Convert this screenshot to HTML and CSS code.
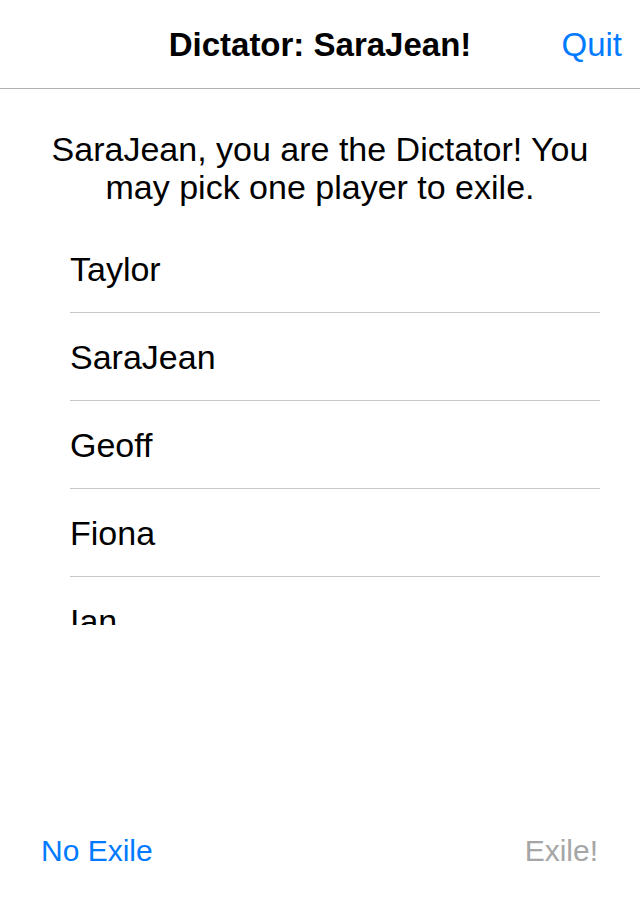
FILE: index.html
```html
<!DOCTYPE html>
<html>
<head>
<meta charset="utf-8">
<link rel="stylesheet" href="styles.css">
</head>
<body>
<div class="screen">
  <header class="navbar">
    <span></span>
    <h1 class="title">Dictator: SaraJean!</h1>
    <a class="nav-action">Quit</a>
  </header>
  <p class="message">SaraJean, you are the Dictator! You may pick one player to exile.</p>
  <ul class="players">
    <li class="player">Taylor</li>
    <li class="player">SaraJean</li>
    <li class="player">Geoff</li>
    <li class="player">Fiona</li>
    <li class="player">Ian</li>
  </ul>
  <footer class="toolbar">
    <a class="tool-btn">No Exile</a>
    <a class="tool-btn disabled">Exile!</a>
  </footer>
</div>
</body>
</html>
```

FILE: styles.css
```css
html, body {
  margin: 0;
  padding: 0;
  background: #ffffff;
}
body {
  font-family: "Liberation Sans", Arial, sans-serif;
  color: #000;
}
.screen {
  width: 640px;
  height: 920px;
  display: flex;
  flex-direction: column;
}
.navbar {
  height: 89px;
  flex: none;
  display: grid;
  grid-template-columns: 1fr auto 1fr;
  align-items: center;
  border-bottom: 1px solid #b2b2b2;
  box-sizing: border-box;
  padding-top: 2px;
}
.title {
  margin: 0;
  font-size: 33px;
  font-weight: bold;
}
.nav-action {
  justify-self: end;
  padding-right: 18px;
  font-size: 33px;
  color: #007aff;
}
.message {
  margin: 0;
  padding: 41px 40px 0;
  height: 136px;
  box-sizing: border-box;
  text-align: center;
  font-size: 34px;
  line-height: 38px;
}
.players {
  list-style: none;
  margin: 0 40px 0 70px;
  padding: 0;
  height: 400px;
  overflow: hidden;
  flex: none;
}
.player {
  height: 88px;
  box-sizing: border-box;
  border-bottom: 1px solid #c8c7cc;
  display: flex;
  align-items: center;
  padding-top: 2px;
  font-size: 34px;
}
.toolbar {
  margin-top: auto;
  height: 104px;
  display: flex;
  justify-content: space-between;
  align-items: center;
  padding: 0 42px 34px 41px;
  box-sizing: border-box;
}
.tool-btn {
  font-size: 30px;
  color: #007aff;
}
.tool-btn.disabled {
  color: #a6a6a6;
}
```
